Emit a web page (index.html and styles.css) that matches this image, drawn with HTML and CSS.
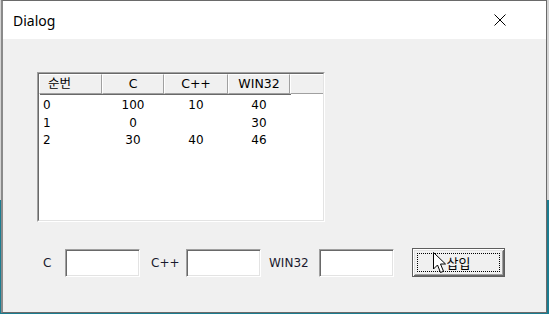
FILE: index.html
```html
<!DOCTYPE html>
<html lang="ko">
<head>
<meta charset="UTF-8">
<title>Dialog</title>
<link rel="stylesheet" href="styles.css">
</head>
<body>
<div class="window">
    <div class="titlebar">
        <span class="title">Dialog</span>
        <svg class="close" width="12" height="12" viewBox="0 0 12 12">
            <path d="M0.5 0.5 L11.5 11.5 M11.5 0.5 L0.5 11.5" stroke="#000" stroke-width="1" fill="none"/>
        </svg>
    </div>
    <div class="client">
        <div class="listview">
            <div class="listview-inner">
                <div class="header">
                    <div class="hcell col0 left">순번</div>
                    <div class="hcell col1">C</div>
                    <div class="hcell col2">C++</div>
                    <div class="hcell col3">WIN32</div>
                    <div class="hcell rest"></div>
                </div>
                <div class="rows">
                    <div class="row">
                        <span class="cell col0 left">0</span>
                        <span class="cell col1">100</span>
                        <span class="cell col2">10</span>
                        <span class="cell col3">40</span>
                    </div>
                    <div class="row">
                        <span class="cell col0 left">1</span>
                        <span class="cell col1">0</span>
                        <span class="cell col2"></span>
                        <span class="cell col3">30</span>
                    </div>
                    <div class="row">
                        <span class="cell col0 left">2</span>
                        <span class="cell col1">30</span>
                        <span class="cell col2">40</span>
                        <span class="cell col3">46</span>
                    </div>
                </div>
            </div>
        </div>

        <div class="inputs">
            <span class="label lbl-c">C</span>
            <input type="text" class="edit">
            <span class="label lbl-cpp">C++</span>
            <input type="text" class="edit">
            <span class="label lbl-win">WIN32</span>
            <input type="text" class="edit">
            <div class="button">
                <div class="focus">삽입</div>
                <svg class="cursor" width="14" height="22" viewBox="0 0 14 22">
                    <path d="M0.5 0.5 L0.5 17 L4.5 13 L7.5 20.5 L10.5 19.3 L7.5 12 L12.5 12 Z" fill="#fff" stroke="#000" stroke-width="1"/>
                </svg>
            </div>
        </div>
    </div>
</div>
</body>
</html>
```

FILE: styles.css
```css
body {
    margin: 0;
    width: 549px;
    height: 314px;
    overflow: hidden;
    background: linear-gradient(to bottom, #d4d4d4 0, #d4d4d4 200px, #1b7c90 200px);
    font-family: "DejaVu Sans", "Noto Sans CJK KR", sans-serif;
}

.window {
    margin-left: 1px;
    width: 546px;
    height: 313px;
    border: 1px solid #6a6a6a;
    border-left: 2px solid #8a8a8a;
    box-sizing: border-box;
    background-color: #f0f0f0;
    display: flex;
    flex-direction: column;
}

.titlebar {
    height: 38px;
    background-color: #fff;
    display: flex;
    align-items: center;
    justify-content: space-between;
    padding: 0 40px 0 10px;
    flex-shrink: 0;
}

.title {
    font-family: "Noto Sans", "Open Sans", sans-serif;
    font-size: 14px;
    color: #000;
}

.close {
    display: block;
}

.client {
    flex: 1;
    padding: 33px 0 0 34px;
}

.listview {
    width: 288px;
    height: 150px;
    box-sizing: border-box;
    border: 1px solid;
    border-color: #a0a0a0 #ffffff #ffffff #a0a0a0;
}

.listview-inner {
    height: 100%;
    box-sizing: border-box;
    border: 1px solid;
    border-color: #696969 #e3e3e3 #e3e3e3 #696969;
    background-color: #fff;
    font-size: 12px;
    color: #000;
}

.header {
    display: flex;
    height: 20px;
}

.hcell {
    box-sizing: border-box;
    height: 20px;
    line-height: 17px;
    text-align: center;
    background-color: #f0f0f0;
    border-top: 1px solid #fff;
    border-left: 1px solid #fff;
    border-right: 1px solid #a0a0a0;
    border-bottom: 1px solid #a0a0a0;
    box-shadow: 1px 1px 0 #696969;
    font-size: 12.5px;
}

.col0 { width: 63px; }
.col1 { width: 62px; }
.col2 { width: 64px; }
.col3 { width: 62px; }
.rest { flex: 1; box-shadow: none; border-right: none; }

.hcell.left {
    text-align: left;
    padding-left: 8px;
}

.rows {
    padding-top: 3px;
}

.row {
    display: flex;
    height: 17.5px;
    line-height: 17.5px;
}

.cell {
    display: block;
    text-align: center;
}

.cell.left {
    text-align: left;
    padding-left: 4px;
    box-sizing: border-box;
}

.inputs {
    display: flex;
    align-items: center;
    margin-top: 26px;
    margin-left: 6px;
    font-size: 12px;
    color: #1a1a2e;
}

.label {
    display: block;
}

.lbl-c { width: 22px; }
.lbl-cpp { width: 35px; margin-left: 11px; }
.lbl-win { width: 50px; margin-left: 8px; }

.edit {
    width: 75px;
    height: 28px;
    box-sizing: border-box;
    margin: 0;
    padding: 0;
    border: 1px solid;
    border-color: #a0a0a0 #ffffff #ffffff #a0a0a0;
    box-shadow: inset 1px 1px 0 #696969, inset -1px -1px 0 #e3e3e3;
    background-color: #fff;
    outline: none;
}

.button {
    position: relative;
    margin-left: 18px;
    width: 93px;
    height: 29px;
    box-sizing: border-box;
    border: 1px solid #5e5e5e;
    background-color: #f0f0f0;
    box-shadow: inset 1px 1px 0 #ffffff, inset -1px -1px 0 #696969, inset 2px 2px 0 #e3e3e3, inset -2px -2px 0 #a0a0a0;
    padding: 4px;
}

.focus {
    height: 100%;
    box-sizing: border-box;
    border: 1px dotted #000;
    display: flex;
    align-items: center;
    justify-content: center;
    font-size: 13px;
    color: #000;
}

.cursor {
    position: absolute;
    left: 20px;
    top: 3px;
}
```
